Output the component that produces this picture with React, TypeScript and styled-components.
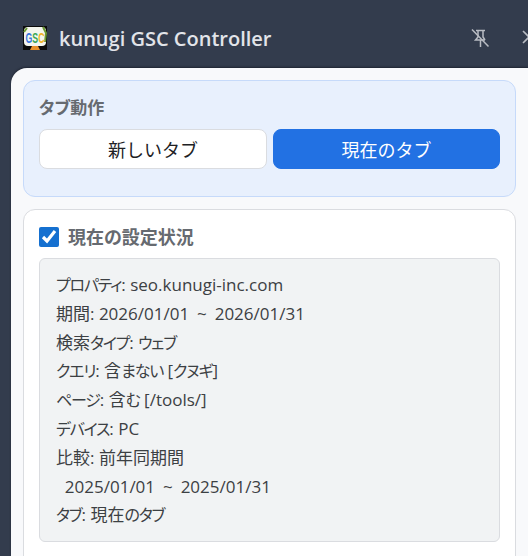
import { useState } from 'react';
import styled, { createGlobalStyle } from 'styled-components';

const GlobalStyle = createGlobalStyle`
  html, body {
    margin: 0;
    padding: 0;
    width: 528px;
    height: 556px;
    overflow: hidden;
    background: #333c4d;
    font-family: "Open Sans", "Noto Sans", "Noto Sans CJK JP", sans-serif;
    font-feature-settings: "palt";
  }
  * { box-sizing: border-box; }
`;

const Window = styled.div`
  width: 528px;
  height: 556px;
  overflow: hidden;
  background: #333c4d;
  display: flex;
  flex-direction: column;
`;

const TitleBar = styled.header`
  height: 68px;
  flex: none;
  display: flex;
  align-items: center;
  padding: 8px 0 0 23px;
`;

const Logo = styled.svg`
  width: 24px;
  height: 24px;
  flex: none;
`;

const Title = styled.h1`
  margin: 0 0 0 12px;
  flex: 1;
  font-size: 20px;
  font-weight: 600;
  color: #e2e4e9;
  white-space: nowrap;
`;

const IconButton = styled.button`
  width: 20px;
  height: 20px;
  padding: 0;
  border: 0;
  flex: none;
  background: none;
  color: #b9bcc3;
  display: flex;
  align-items: center;
  justify-content: center;
`;

const PinButton = styled(IconButton)`
  margin-right: 30px;
`;

const CloseButton = styled(IconButton)`
  margin-right: -12px;
`;

const Panel = styled.main`
  flex: 1;
  margin-left: 11px;
  padding: 12px 12px 0;
  background: #f8f9fb;
  border-top-left-radius: 16px;
  box-shadow: 0 -1px 2px rgba(10, 14, 24, 0.5);
  display: flex;
  flex-direction: column;
  gap: 12px;
  min-height: 0;
`;

const TabCard = styled.section`
  height: 117px;
  flex: none;
  padding: 15px 15px;
  background: #e8f0fd;
  border: 1px solid #c6dafa;
  border-radius: 12px;
`;

const SectionLabel = styled.div`
  font-size: 17px;
  font-weight: 600;
  line-height: 24px;
  color: #666a70;
  margin-bottom: 9px;
`;

const TabButtons = styled.div`
  display: grid;
  grid-template-columns: 228px 1fr;
  gap: 6px;
`;

const TabButton = styled.button<{ $active?: boolean }>`
  height: 40px;
  padding: 0;
  border-radius: 8px;
  font-family: inherit;
  font-size: 18px;
  font-weight: 400;
  border: 1px solid ${p => (p.$active ? '#2271e3' : '#dadce0')};
  background: ${p => (p.$active ? '#2271e3' : '#ffffff')};
  color: ${p => (p.$active ? '#ffffff' : '#202124')};
`;

const StatusCard = styled.section`
  flex: none;
  height: 360px;
  padding: 15px 15px;
  background: #ffffff;
  border: 1px solid #dadce0;
  border-radius: 12px;
`;

const StatusHeader = styled.label`
  display: flex;
  align-items: center;
  gap: 9px;
  height: 24px;
  margin-bottom: 9px;
`;

const Check = styled.input`
  width: 20px;
  height: 20px;
  margin: 0;
  accent-color: #1570d0;
`;

const StatusTitle = styled.span`
  font-size: 18px;
  line-height: 24px;
  font-weight: 600;
  color: #666a70;
`;

const Summary = styled.div`
  height: 284px;
  padding: 12px 16px;
  background: #f1f3f4;
  border: 1px solid #dadce0;
  border-radius: 6px;
  font-size: 17px;
  line-height: 28.8px;
  color: #3c4043;
  white-space: pre;
`;

const Kana = styled.span`
  font-size: 16px;
  letter-spacing: -1.2px;
`;

const Tilde = styled.span`
  margin: 0 3.5px;
`;

const summaryLines = [
  'プロパティ: seo.kunugi-inc.com',
  '期間: 2026/01/01 ~ 2026/01/31',
  '検索タイプ: ウェブ',
  'クエリ: 含まない [クヌギ]',
  'ページ: 含む [/tools/]',
  'デバイス: PC',
  '比較: 前年同期間',
  '  2025/01/01 ~ 2025/01/31',
  'タブ: 現在のタブ',
];

// kana and the tilde are narrower / wider in the original font
const renderLine = (line: string) =>
  line.split(/([\u3040-\u30ff]+|~)/).map((part, i) => {
    if (part === '~') return <Tilde key={i}>~</Tilde>;
    if (/^[\u3040-\u30ff]/.test(part)) return <Kana key={i}>{part}</Kana>;
    return part;
  });

const App = () => {
  const [checked, setChecked] = useState(true);
  return (
    <Window>
      <GlobalStyle />
      <TitleBar>
        <Logo viewBox="0 0 24 24">
          <rect width="24" height="24" fill="#0b0b0b" />
          <rect x="1" y="1" width="22" height="19" rx="4" fill="#f4f6ee" />
          <path d="M1 6 L4 2 M20 1 L23 7 L22 16" stroke="#6b9a35" strokeWidth="2" fill="none" />
          <path d="M7 24 L9 20 H15 L17 24 Z" fill="#e8912a" />
          <text x="2.5" y="17" fontSize="14" fontWeight="700" fontFamily="Liberation Sans" textLength="19" lengthAdjust="spacingAndGlyphs">
            <tspan fill="#3b78e0">G</tspan>
            <tspan fill="#3aa655">S</tspan>
            <tspan fill="#f0b429">C</tspan>
          </text>
        </Logo>
        <Title>kunugi GSC Controller</Title>
        <PinButton aria-label="pin">
          <svg width="20" height="20" viewBox="0 0 20 20" fill="none" stroke="currentColor" strokeWidth="1.5">
            <path d="M6 2.5H15M8 2.5V9L5.5 12H15M13 2.5V9L15 12M10.5 12V19" />
            <path d="M2 1.5L18.5 18.5" />
          </svg>
        </PinButton>
        <CloseButton aria-label="close">
          <svg width="20" height="20" viewBox="0 0 20 20" fill="none" stroke="currentColor" strokeWidth="1.6">
            <path d="M3 3L15 15M15 3L3 15" />
          </svg>
        </CloseButton>
      </TitleBar>
      <Panel>
        <TabCard>
          <SectionLabel>タブ動作</SectionLabel>
          <TabButtons>
            <TabButton>新しいタブ</TabButton>
            <TabButton $active>現在のタブ</TabButton>
          </TabButtons>
        </TabCard>
        <StatusCard>
          <StatusHeader>
            <Check type="checkbox" checked={checked} onChange={e => setChecked(e.target.checked)} />
            <StatusTitle>現在の設定状況</StatusTitle>
          </StatusHeader>
          <Summary>
            {summaryLines.map((line, i) => (
              <div key={i}>{renderLine(line)}</div>
            ))}
          </Summary>
        </StatusCard>
      </Panel>
    </Window>
  );
};

export default App;
